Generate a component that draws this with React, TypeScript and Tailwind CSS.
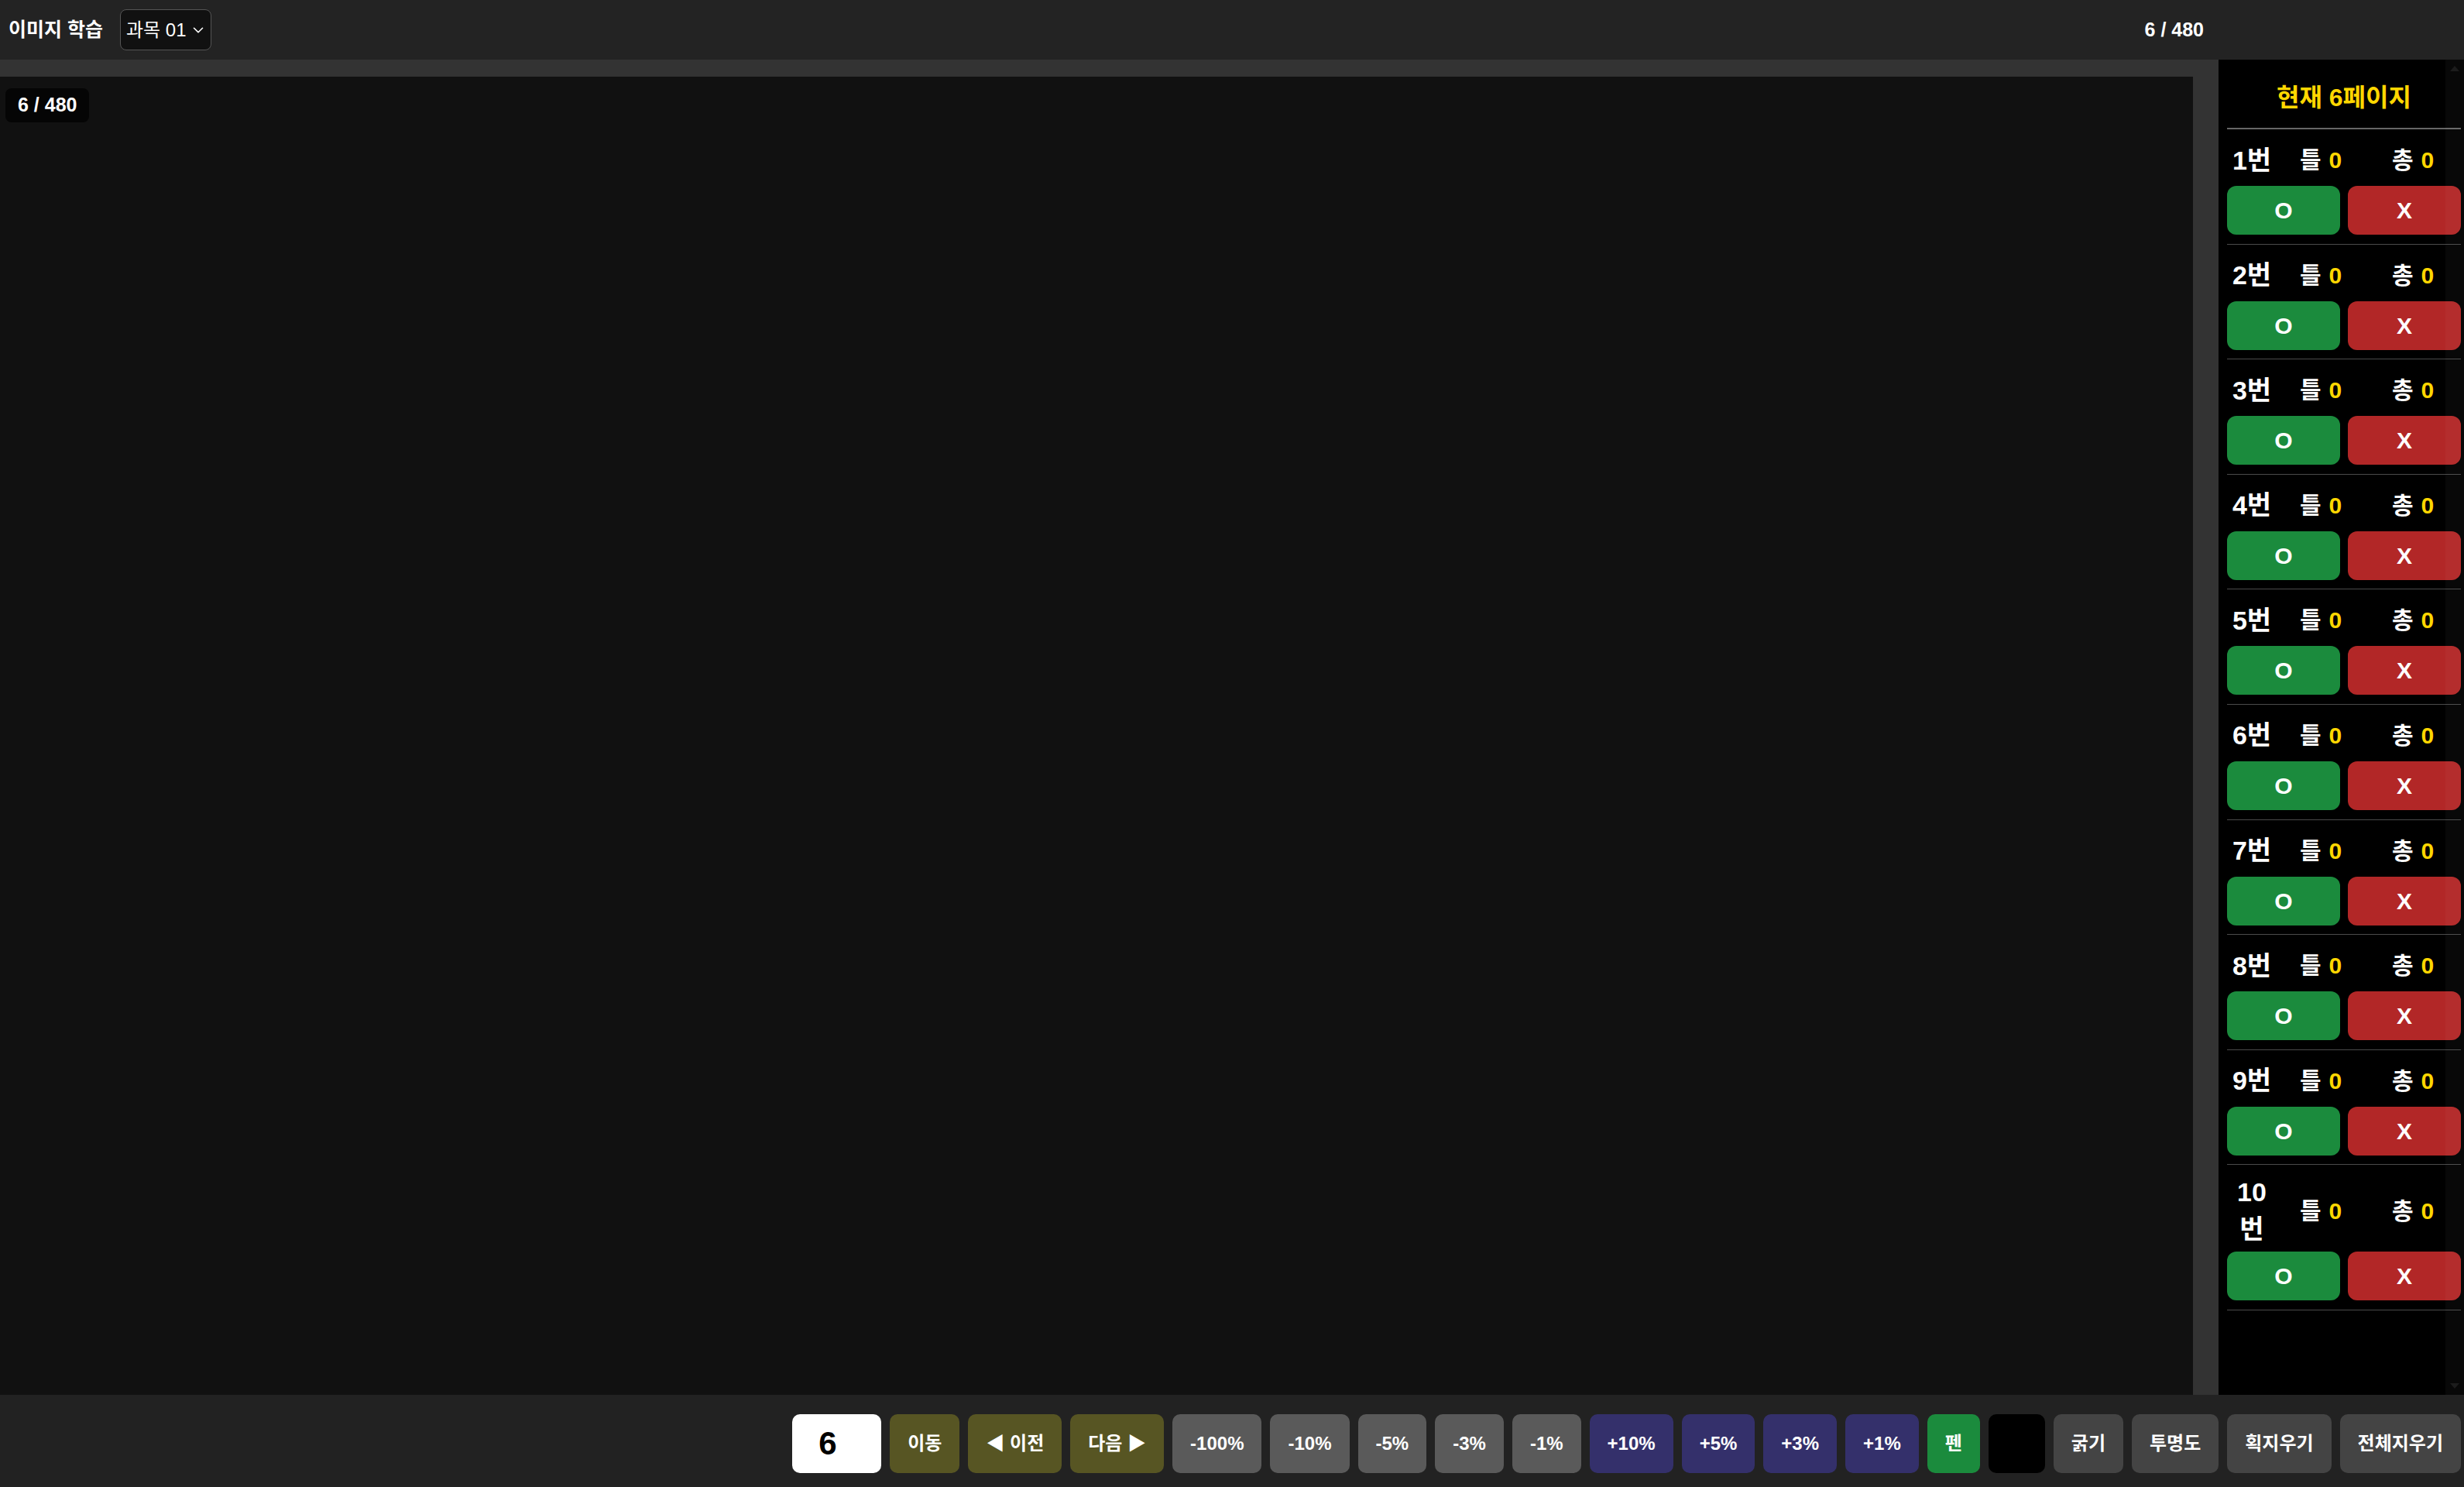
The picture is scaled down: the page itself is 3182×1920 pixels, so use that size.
import { ChevronDown } from "lucide-react";

const rows = [1, 2, 3, 4, 5, 6, 7, 8, 9, 10];

const tools = [
  { label: "이동", cls: "bg-[#575523]" },
  { label: "◀ 이전", cls: "bg-[#575523]" },
  { label: "다음 ▶", cls: "bg-[#575523]" },
  { label: "-100%", cls: "bg-[#5a5a5a]" },
  { label: "-10%", cls: "bg-[#5a5a5a]" },
  { label: "-5%", cls: "bg-[#5a5a5a]" },
  { label: "-3%", cls: "bg-[#5a5a5a]" },
  { label: "-1%", cls: "bg-[#5a5a5a]" },
  { label: "+10%", cls: "bg-[#34306b]" },
  { label: "+5%", cls: "bg-[#34306b]" },
  { label: "+3%", cls: "bg-[#34306b]" },
  { label: "+1%", cls: "bg-[#34306b]" },
  { label: "펜", cls: "bg-[#1b8b3d]" },
];

const tools2 = ["굵기", "투명도", "획지우기", "전체지우기"];

function QuestionRow({ n }: { n: number }) {
  return (
    <div className="pt-[11px] pb-[11.6px] border-b border-[#4a4a4a]">
      <div className="flex items-center min-h-[57px]">
        <div className="w-[64px] text-center text-[34px] leading-[48px] font-bold text-white">
          {n}번
        </div>
        <div className="ml-[30px] w-[119px] flex items-center text-[30px] font-bold">
          <span className="text-white">틀</span>
          <span className="ml-[10px] text-[#ffd700]">0</span>
        </div>
        <div className="flex items-center text-[30px] font-bold">
          <span className="text-white">총</span>
          <span className="ml-[10px] text-[#ffd700]">0</span>
        </div>
      </div>
      <div className="mt-[5px] grid grid-cols-2 gap-[10px]">
        <button className="h-[63px] rounded-[12px] bg-[#1b8b3d] text-white text-[30px] font-bold">
          O
        </button>
        <button className="h-[63px] rounded-[12px] bg-[#b22727] text-white text-[30px] font-bold">
          X
        </button>
      </div>
    </div>
  );
}

export default function App() {
  return (
    <div className="h-screen w-full flex flex-col overflow-hidden bg-[#222] font-['Liberation_Sans','Noto_Sans_CJK_KR',sans-serif]">
      <header className="h-[77px] shrink-0 bg-[#232323] flex items-center pl-[11px] pr-[336px]">
        <h1 className="text-[25px] font-bold text-white">이미지 학습</h1>
        <div className="ml-[22px] h-[53px] w-[118px] rounded-[8px] border border-[#555] bg-[#111] flex items-center pl-[7px] gap-[5px] text-white text-[24px]">
          <span>과목 01</span>
          <ChevronDown size={22} strokeWidth={1.75} />
        </div>
        <div className="ml-auto text-[25px] font-bold text-white">6 / 480</div>
      </header>

      <div className="flex-1 flex min-h-0">
        <main className="flex-1 bg-[#333] pt-[22px] pr-[33px] flex">
          <div className="relative flex-1 bg-[#111]">
            <div className="absolute left-[7px] top-[15px] h-[44px] px-[16px] flex items-center rounded-[8px] bg-[#050505] text-white text-[25px] font-bold">
              6 / 480
            </div>
          </div>
        </main>

        <aside className="relative w-[317px] shrink-0 bg-black pl-[11px] pr-[4px] overflow-hidden">
          <div className="pt-[31px] pb-[21px] border-b-2 border-[#666] text-center text-[32px] leading-[36px] font-bold text-[#ffd700]">
            현재 6페이지
          </div>
          {rows.map((n) => (
            <QuestionRow key={n} n={n} />
          ))}
          <div className="absolute right-0 top-0 bottom-0 w-[24px] bg-white/[0.03] flex flex-col justify-between items-center py-[8px]">
            <div className="w-0 h-0 border-l-[6px] border-r-[6px] border-b-[7px] border-l-transparent border-r-transparent border-b-[#1c1c1c]" />
            <div className="w-0 h-0 border-l-[6px] border-r-[6px] border-t-[7px] border-l-transparent border-r-transparent border-t-[#1c1c1c]" />
          </div>
        </aside>
      </div>

      <footer className="h-[119px] shrink-0 bg-[#222] flex justify-end items-start pt-[25px] pr-[4px] gap-[11px]">
        <input
          readOnly
          value="6"
          className="h-[76px] w-[115px] rounded-[10px] bg-white pl-[34px] text-[42px] font-bold text-black outline-none"
        />
        {tools.map((t) => (
          <button
            key={t.label}
            className={`h-[76px] px-[23px] rounded-[10px] text-white text-[24px] font-bold whitespace-nowrap ${t.cls}`}
          >
            {t.label}
          </button>
        ))}
        <div className="h-[76px] w-[73px] rounded-[10px] bg-black" />
        {tools2.map((t) => (
          <button
            key={t}
            className="h-[76px] px-[23px] rounded-[10px] bg-[#444] text-white text-[24px] font-bold whitespace-nowrap"
          >
            {t}
          </button>
        ))}
      </footer>
    </div>
  );
}
